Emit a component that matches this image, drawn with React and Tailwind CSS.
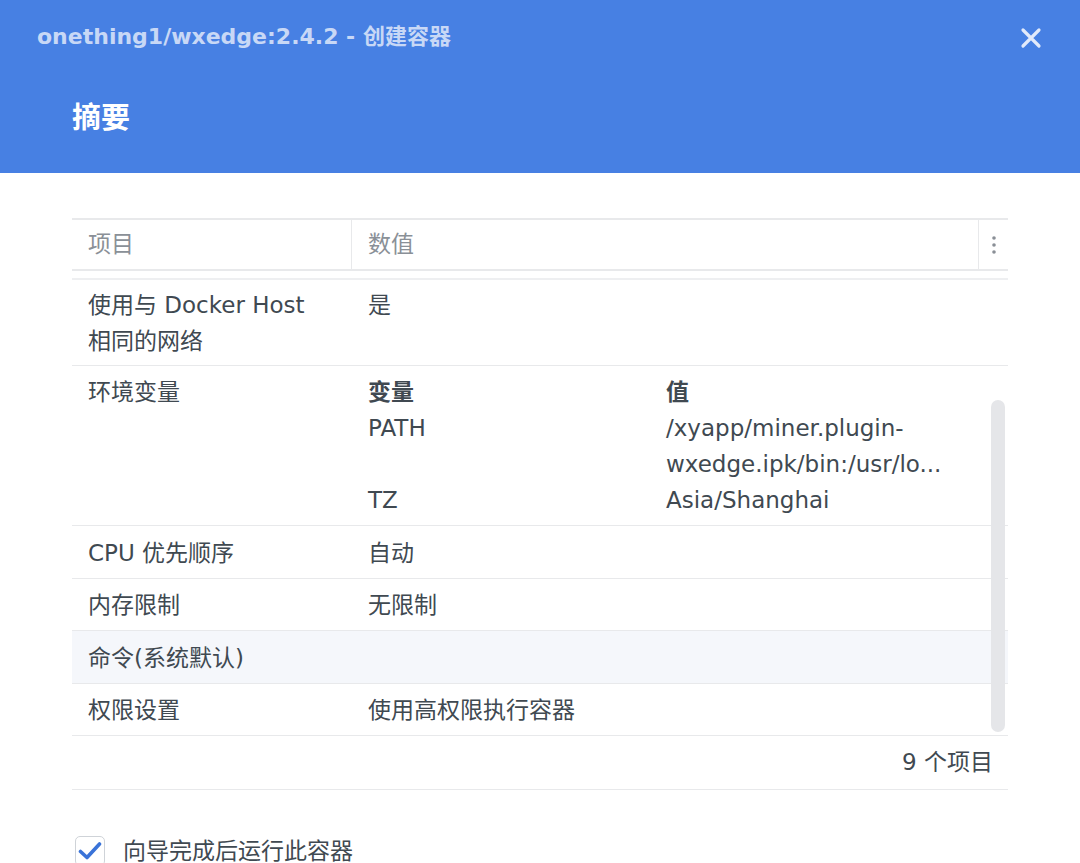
import React from "react";

const font = { fontFamily: '"DejaVu Sans", "Noto Sans CJK SC", sans-serif' };

function Row({ label, children, shaded, pad = "pt-[8px] pb-[7px]" }) {
  return (
    <div className={`flex border-b border-[#e8e9eb] leading-[36px] ${pad} ${shaded ? "bg-[#f5f7fb]" : ""}`}>
      <div className="w-[280px] pl-4 pr-4">{label}</div>
      <div className="flex-1 pl-4">{children}</div>
    </div>
  );
}

export default function App() {
  return (
    <div className="w-[1080px] h-[863px] overflow-hidden bg-white text-[#404951]" style={font}>
      {/* header */}
      <div className="h-[173px] bg-[#4780e3]">
        <div className="flex items-center justify-between pl-[37px] pr-[38px] pt-[22px]">
          <div className="text-[22px] font-bold text-[#c8d8f6] leading-[30px]">onething1/wxedge:2.4.2 - 创建容器</div>
          <svg width="22" height="22" viewBox="0 0 22 22" className="mt-[2px]">
            <path d="M3 3 L19 19 M19 3 L3 19" stroke="#e2eafb" strokeWidth="3.2" strokeLinecap="round" />
          </svg>
        </div>
        <div className="pl-[72px] mt-[46px] text-[29px] font-bold text-white leading-[40px]">摘要</div>
      </div>

      <div className="px-[72px] pt-[45px] text-[23px]">
        <div className="relative">
          {/* table head */}
          <div className="flex h-[53px] border-t-2 border-b-2 border-[#e8e9eb] text-[#8a9097] items-stretch">
            <div className="w-[280px] pl-4 flex items-center border-r border-[#e8e9eb]">项目</div>
            <div className="flex-1 pl-4 flex items-center border-r border-[#e8e9eb]">数值</div>
            <div className="w-[29px] flex items-center justify-center">
              <svg width="4" height="18" viewBox="0 0 4 18">
                <circle cx="2" cy="2" r="1.8" fill="#8a8f96" />
                <circle cx="2" cy="9" r="1.8" fill="#8a8f96" />
                <circle cx="2" cy="16" r="1.8" fill="#8a8f96" />
              </svg>
            </div>
          </div>

          {/* body */}
          <div className="mt-[7px] border-t-2 border-[#eeeff1]">
            <Row label={<>使用与 Docker Host<br />相同的网络</>} pad="pt-[7px] pb-[6px]">是</Row>
            <Row label="环境变量">
              <div className="flex">
                <div className="w-[298px]">
                  <div className="font-bold">变量</div>
                  <div>PATH</div>
                  <div>&nbsp;</div>
                  <div>TZ</div>
                </div>
                <div>
                  <div className="font-bold">值</div>
                  <div>/xyapp/miner.plugin-</div>
                  <div>wxedge.ipk/bin:/usr/lo...</div>
                  <div>Asia/Shanghai</div>
                </div>
              </div>
            </Row>
            <Row label="CPU 优先顺序" pad="pt-[9px] pb-[7px]">自动</Row>
            <Row label="内存限制" pad="pt-[8px] pb-[7px]">无限制</Row>
            <Row label="命令(系统默认)" shaded pad="pt-[9px] pb-[7px]">{""}</Row>
            <Row label="权限设置">使用高权限执行容器</Row>
          </div>

          {/* scrollbar */}
          <div className="absolute right-[3px] top-[182px] w-[14px] h-[332px] rounded-full bg-[#e5e6e9]"></div>

          {/* footer */}
          <div className="h-[54px] border-b border-[#e8e9eb] flex items-center justify-end pr-[15px]">9 个项目</div>
        </div>

        <div className="mt-[44px] flex items-center">
          <div className="ml-[3px] w-[30px] h-[30px] rounded-[5px] border border-[#cfd3d8] flex items-center justify-center">
            <svg width="24" height="20" viewBox="0 0 24 20">
              <path d="M2.5 10.5 L9 16.5 L21.5 3" fill="none" stroke="#3a73d8" strokeWidth="3.6" strokeLinecap="round" strokeLinejoin="round" />
            </svg>
          </div>
          <div className="ml-[18px]">向导完成后运行此容器</div>
        </div>
      </div>
    </div>
  );
}
